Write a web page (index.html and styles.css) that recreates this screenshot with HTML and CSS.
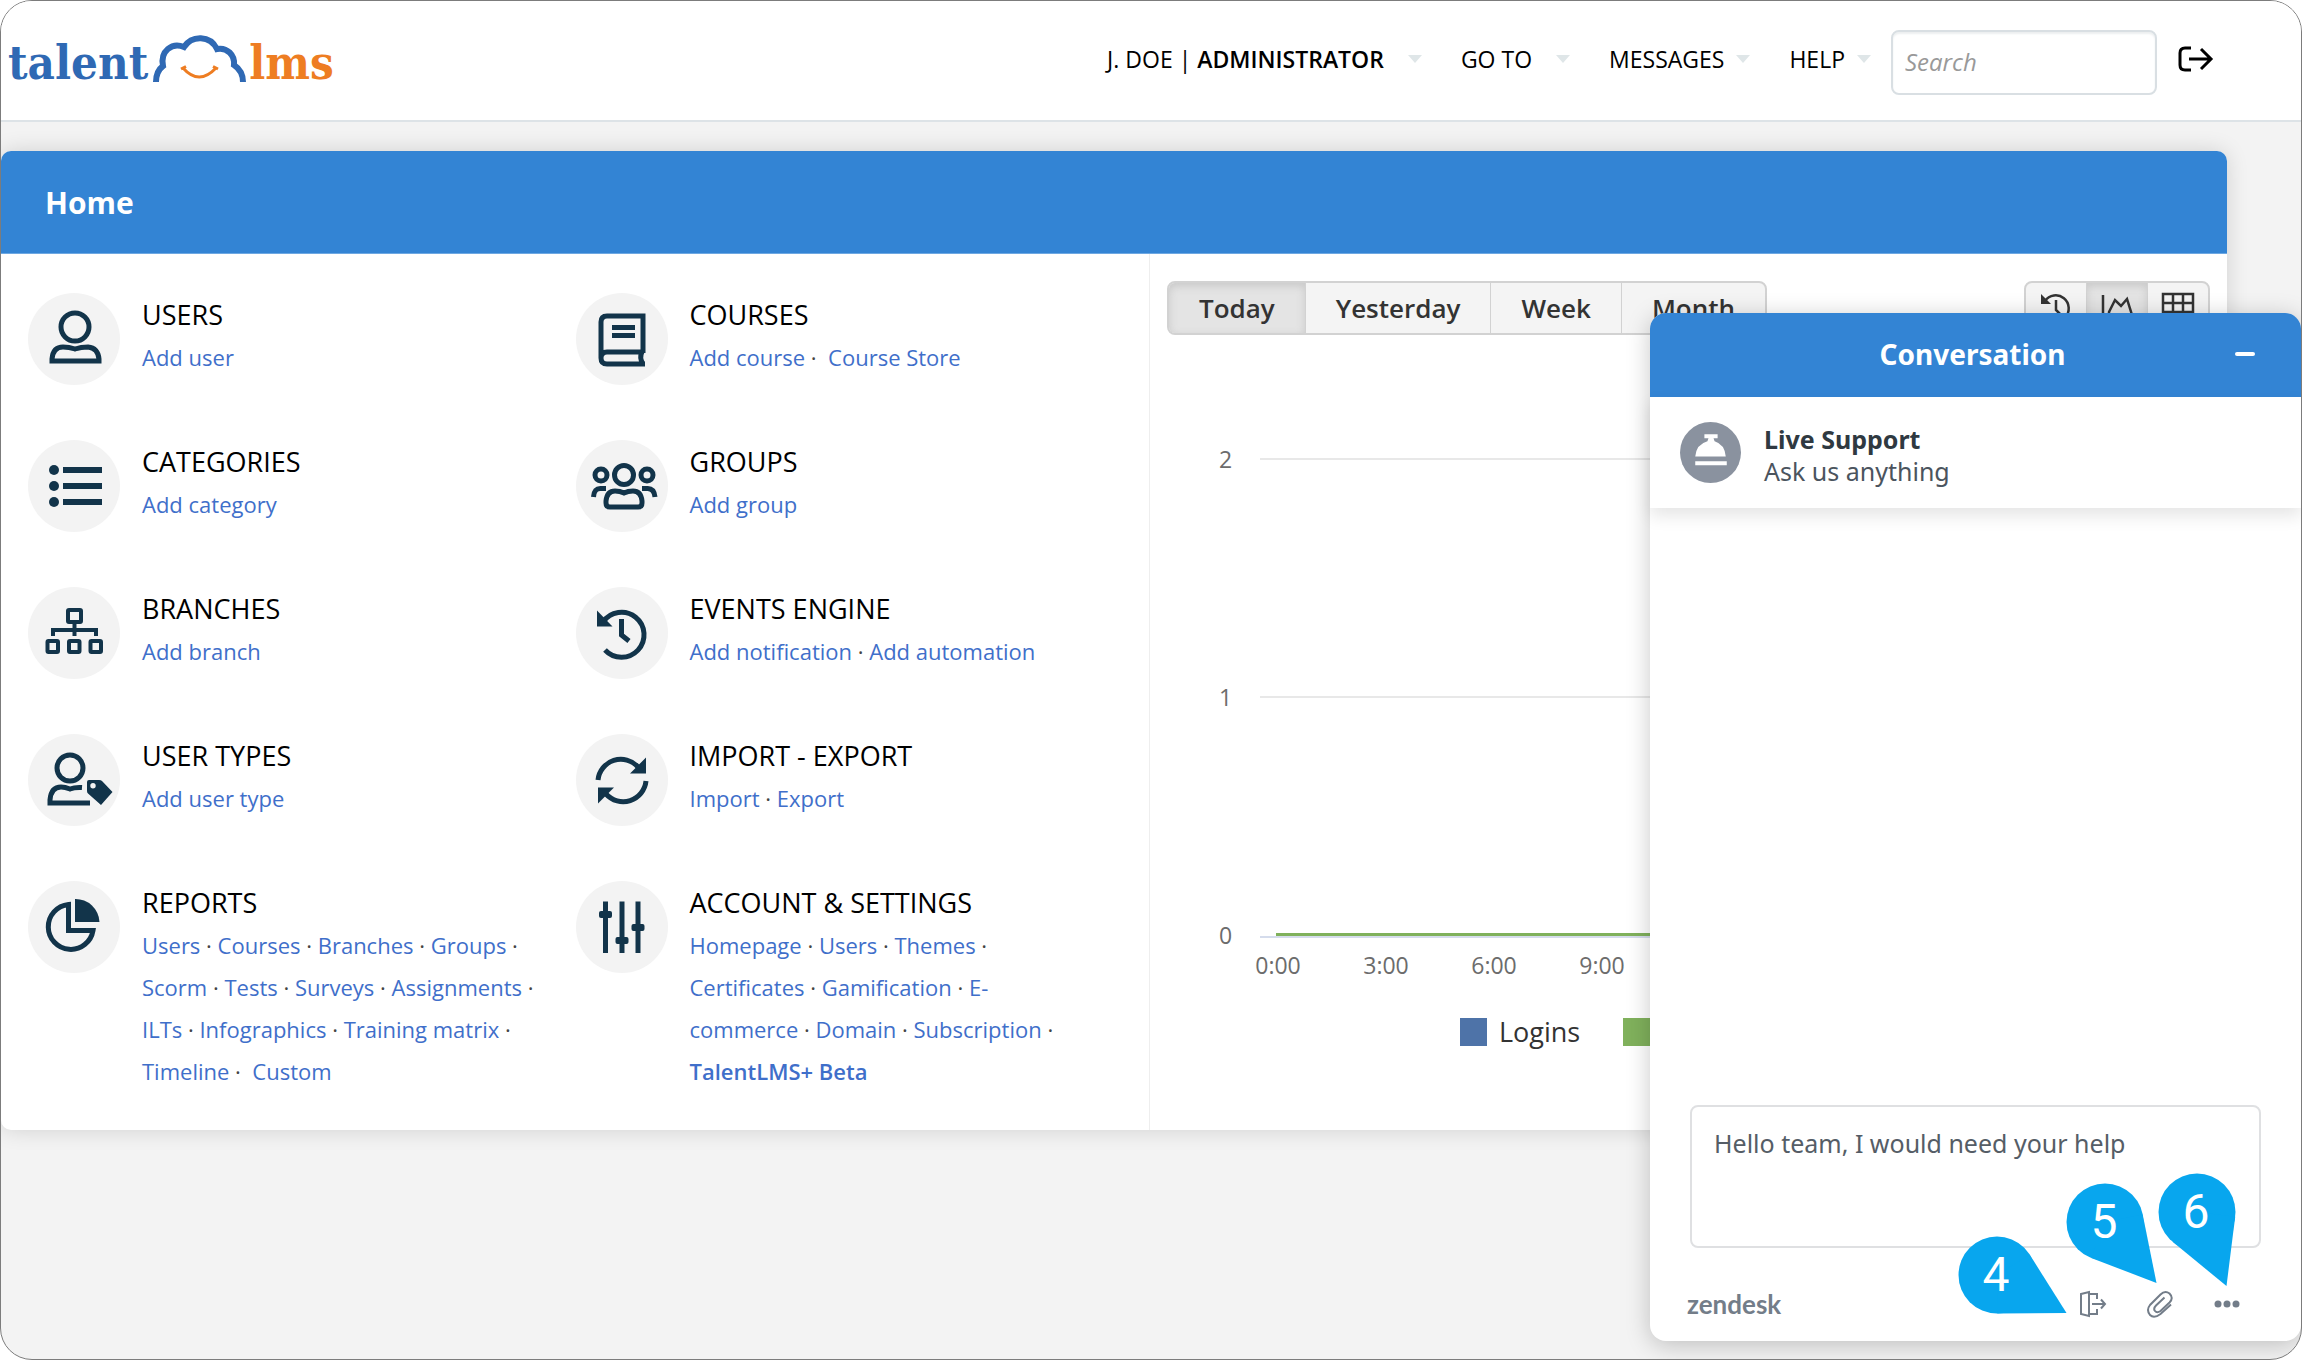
FILE: index.html
```html
<!DOCTYPE html>
<html lang="en">
<head>
<meta charset="utf-8">
<title>TalentLMS - Home</title>
<link rel="stylesheet" href="styles.css">
</head>
<body>
<div class="frame">
  <header class="topbar">
    <a class="logo" href="#" aria-label="TalentLMS">
      <span class="logo-talent">talent</span>
      <svg class="logo-cloud" viewBox="0 0 98 50" aria-hidden="true">
        <path d="M5 48C5 40 8 35 12 32C9 17 21 8 33 13C41 1 59 1 66 15C76 13 84 21 83 31C89 35 92 41 92 48" fill="none" stroke="#2f69b4" stroke-width="6"/>
        <path d="M32 34Q48 52 65 34M30 35L35 32.500M62 32.500L67 35" fill="none" stroke="#ee7d22" stroke-width="3"/>
      </svg>
      <span class="logo-lms">lms</span>
    </a>
    <nav class="menu">
      <a href="#" class="menu-item menu-user"><span>J. DOE | <b>ADMINISTRATOR</b></span><i class="caret"></i></a>
      <a href="#" class="menu-item menu-goto">GO TO<i class="caret"></i></a>
      <a href="#" class="menu-item menu-messages">MESSAGES<i class="caret"></i></a>
      <a href="#" class="menu-item menu-help">HELP<i class="caret"></i></a>
      <input class="search" type="search" placeholder="Search" aria-label="Search">
      <a href="#" class="logout" aria-label="Log out">
        <svg viewBox="0 0 36 26" aria-hidden="true"><path d="M13 2H7Q2 2 2 7V19Q2 24 7 24H13M11 13H33M23 3L33 13L23 23" fill="none" stroke="#000" stroke-width="3"/></svg>
      </a>
    </nav>
  </header>

  <main class="card">
    <h1 class="card-title">Home</h1>
    <div class="card-body">
      <div class="tiles">
        <section class="tile">
          <svg class="icon" viewBox="0 0 92 92" aria-hidden="true"><circle cx="47" cy="34" r="14"/><path d="M24 68V66Q25 54 35 54Q41 54 47 56Q53 54 60 54Q70 55 71 66V68Z"/></svg>
          <div class="tile-text"><h2>USERS</h2><p><a href="#">Add user</a></p></div>
        </section>
        <section class="tile">
          <svg class="icon" viewBox="0 0 92 92" aria-hidden="true"><path d="M67 60V23H31Q25 23 25 29V65Q25 71 31 71H69M25 65Q25 59 31 59H67M66 59Q63 65 67 71M36 34.500H59M36 42.500H59"/></svg>
          <div class="tile-text"><h2>COURSES</h2><p><a href="#">Add course</a> · &nbsp;<a href="#">Course Store</a></p></div>
        </section>
        <section class="tile">
          <svg class="icon" viewBox="0 0 92 92" aria-hidden="true"><path d="M35 30H74M35 46H74M35 62H74" stroke-width="6"/><g class="solid"><circle cx="26" cy="30" r="5"/><circle cx="26" cy="46" r="5"/><circle cx="26" cy="62" r="5"/></g></svg>
          <div class="tile-text"><h2>CATEGORIES</h2><p><a href="#">Add category</a></p></div>
        </section>
        <section class="tile">
          <svg class="icon" viewBox="0 0 92 92" aria-hidden="true"><circle cx="48" cy="35" r="9.500"/><circle cx="25" cy="35" r="6"/><circle cx="71" cy="35" r="6"/><path d="M34 67H62Q66 67 66 63V61Q65 51 57 51Q52 51 48 53Q44 51 39 51Q31 51 30 61V63Q30 67 34 67ZM17.500 57Q18 48 25 48.500H30M79 57Q78 48 71 48.500H66"/></svg>
          <div class="tile-text"><h2>GROUPS</h2><p><a href="#">Add group</a></p></div>
        </section>
        <section class="tile">
          <svg class="icon thin" viewBox="0 0 92 92" aria-hidden="true"><rect x="40" y="23" width="13" height="12" rx="1"/><rect x="19.500" y="54" width="10.500" height="11" rx="1"/><rect x="41" y="54" width="10.500" height="11" rx="1"/><rect x="62.500" y="54" width="10.500" height="11" rx="1"/><path d="M46.500 35V49M25 49V43H68V49"/></svg>
          <div class="tile-text"><h2>BRANCHES</h2><p><a href="#">Add branch</a></p></div>
        </section>
        <section class="tile">
          <svg class="icon" viewBox="0 0 92 92" aria-hidden="true"><path d="M27 35A22.500 22.500 0 1 1 29 63M45.500 32V48L53 54"/><path class="solid" d="M21 23.500V39.500H36.500Z"/></svg>
          <div class="tile-text"><h2>EVENTS ENGINE</h2><p><a href="#">Add notification</a> · <a href="#">Add automation</a></p></div>
        </section>
        <section class="tile">
          <svg class="icon" viewBox="0 0 92 92" aria-hidden="true"><circle cx="42" cy="34" r="13"/><path d="M62 69H22V66Q23 53 33 53Q37 53 42 55Q47 53 54 53.500"/><path class="solid" fill-rule="evenodd" d="M59 48Q59 46 61 46H71Q73 46 74 47L84.500 58L73 71L60 59.500Q59 58.500 59 57ZM65 49A2.700 2.700 0 1 0 65 54.400A2.700 2.700 0 1 0 65 49Z"/></svg>
          <div class="tile-text"><h2>USER TYPES</h2><p><a href="#">Add user type</a></p></div>
        </section>
        <section class="tile">
          <svg class="icon" viewBox="0 0 92 92" aria-hidden="true"><path d="M22 46A23 23 0 0 1 62 33M70 47A23 23 0 0 1 30 60"/><path class="solid" d="M70 23.500V39.500H54ZM22 69.500V53.500H38Z"/></svg>
          <div class="tile-text"><h2>IMPORT - EXPORT</h2><p><a href="#">Import</a> · <a href="#">Export</a></p></div>
        </section>
        <section class="tile">
          <svg class="icon" viewBox="0 0 92 92" aria-hidden="true"><path d="M40.500 23.500A22.500 22.500 0 1 0 65 49.500H40.500Z"/><path class="solid" d="M47 18A24 24 0 0 1 71.500 41H47Z"/></svg>
          <div class="tile-text"><h2>REPORTS</h2><p><a href="#">Users</a> · <a href="#">Courses</a> · <a href="#">Branches</a> · <a href="#">Groups</a> · <a href="#">Scorm</a> · <a href="#">Tests</a> · <a href="#">Surveys</a> · <a href="#">Assignments</a> · <a href="#">ILTs</a> · <a href="#">Infographics</a> · <a href="#">Training matrix</a> · <a href="#">Timeline</a> · &nbsp;<a href="#">Custom</a></p></div>
        </section>
        <section class="tile">
          <svg class="icon" viewBox="0 0 92 92" aria-hidden="true"><path d="M29.500 20.500V72M46 20.500V72M62 20.500V72"/><g class="solid"><rect x="23" y="30" width="13" height="7" rx="2"/><rect x="39.500" y="56" width="13" height="7" rx="2"/><rect x="55.500" y="43" width="13" height="7" rx="2"/></g></svg>
          <div class="tile-text"><h2>ACCOUNT &amp; SETTINGS</h2><p><a href="#">Homepage</a> · <a href="#">Users</a> · <a href="#">Themes</a> · <a href="#">Certificates</a> · <a href="#">Gamification</a> · <a href="#">E-commerce</a> · <a href="#">Domain</a> · <a href="#">Subscription</a> · <a href="#"><b>TalentLMS+ Beta</b></a></p></div>
        </section>
      </div>

      <section class="stats">
        <div class="toolbar">
          <div class="group">
            <button type="button" class="active">Today</button><button type="button">Yesterday</button><button type="button">Week</button><button type="button">Month</button>
          </div>
          <div class="group group-icons">
            <button type="button" aria-label="Timeline"><svg viewBox="0 0 36 36"><path d="M7 11A13 13 0 1 1 8 27M18 10V20L22 24" fill="none" stroke="#333" stroke-width="2.500"/><path d="M3 4V14H13Z" fill="#333"/></svg></button><button type="button" class="active" aria-label="Graph"><svg viewBox="0 0 36 36"><path d="M4 5V31H34M10 25V22L16 10L22 16L28 9L33 25Z" fill="none" stroke="#333" stroke-width="2.500"/></svg></button><button type="button" aria-label="Table"><svg viewBox="0 0 36 36"><path d="M3 4H33V32H3ZM3 13H33M3 22H33M13 4V32M23 4V32" fill="none" stroke="#333" stroke-width="2.500"/></svg></button>
          </div>
        </div>
        <div class="chart">
          <div class="level"><span>2</span><i></i></div>
          <div class="level"><span>1</span><i></i></div>
          <div class="level level-zero"><span>0</span><i><i class="series"></i></i></div>
          <div class="hours"><span>0:00</span><span>3:00</span><span>6:00</span><span>9:00</span></div>
          <div class="legend"><i class="swatch logins"></i><span>Logins</span><i class="swatch completions"></i></div>
        </div>
      </section>
    </div>
  </main>

  <aside class="chat">
    <header class="chat-head">
      <h2>Conversation</h2>
      <button type="button" class="minimize" aria-label="Minimize"></button>
    </header>
    <div class="agent">
      <svg class="avatar" viewBox="0 0 60 60" aria-hidden="true"><circle cx="30" cy="30" r="30" fill="#8a929f"/><path d="M15 34Q16 22 27 19L28 16H24V12H37V16H33L34 19Q44 22 45 34ZM15 38.500H46V42.500H15Z" fill="#fff"/></svg>
      <div class="agent-text"><strong>Live Support</strong><span>Ask us anything</span></div>
    </div>
    <div class="log"></div>
    <textarea class="message" aria-label="Message">Hello team, I would need your help</textarea>
    <footer class="chat-foot">
      <a href="#" class="brand">zendesk</a>
      <button type="button" aria-label="End chat"><svg viewBox="0 0 28 28"><path d="M2 4L10 2V26L2 24ZM10 4H18V9M10 24H18V19M13 14H26M22 9.500L26 14L22 18.500" fill="none" stroke="#737d89" stroke-width="2"/></svg></button>
      <button type="button" aria-label="Attach a file"><svg viewBox="0 0 28 28"><path d="M25 14.500L14.500 24Q8 29 4 25Q0 20 4 15L14.500 4.500Q19 0 23.500 3.500Q28 8 23.500 12.500L14.500 21Q11 23.500 9 21Q7 18.500 10 15.500L18.500 7.500" fill="none" stroke="#737d89" stroke-width="2"/></svg></button>
      <button type="button" aria-label="Options"><svg viewBox="0 0 28 28"><g fill="#737d89"><circle cx="5" cy="14" r="3.500"/><circle cx="14" cy="14" r="3.500"/><circle cx="23" cy="14" r="3.500"/></g></svg></button>
    </footer>
    <svg class="pin pin-4" viewBox="-40 -40 122 122"><circle r="38.500"/><path d="M32.600-20.500L69.500 38L0.300 38.500L0 0Z"/><text x="-1" y="16">4</text></svg>
    <svg class="pin pin-5" viewBox="-40 -40 122 122"><circle r="38.500"/><path d="M37.700-7.600L51.500 61L-13.800 35.900L0 0Z"/><text x="-1" y="16">5</text></svg>
    <svg class="pin pin-6" viewBox="-40 -40 122 122"><circle r="38.500"/><path d="M38.200 4.800L29.500 74L-24.400 29.800L0 0Z"/><text x="-1" y="16">6</text></svg>
  </aside>
</div>
</body>
</html>
```

FILE: styles.css
```css
* {
  box-sizing: border-box;
}

body {
  margin: 0;
  background: #fff;
  font-family: "Open Sans", "Noto Sans", sans-serif;
  color: #000;
}

a {
  color: inherit;
  text-decoration: none;
}

h1,
h2,
p {
  margin: 0;
}

button {
  margin: 0;
  padding: 0;
  border: 0;
  background: none;
  font: inherit;
  color: inherit;
}

.frame {
  position: relative;
  min-height: 100vh;
  overflow: hidden;
  border: 1px solid #7c7c7c;
  border-radius: 32px;
  background: #f3f3f3;
}

/* Top bar */

.topbar {
  display: flex;
  justify-content: space-between;
  height: 121px;
  padding: 0 87px 0 7px;
  border-bottom: 2px solid #dde3e7;
  background: #fff;
}

.logo {
  display: flex;
  align-items: flex-start;
  padding-top: 33px;
  font: bold 47px/58px "DejaVu Serif Condensed", "DejaVu Serif", serif;
}

.logo-talent {
  color: #2f69b4;
}

.logo-lms {
  color: #ee7d22;
}

.logo-cloud {
  width: 98px;
  height: 50px;
  margin: 0 0 0 3px;
}

.menu {
  display: flex;
  align-items: center;
  padding-bottom: 4px;
  font-size: 23px;
}

.menu-item {
  display: flex;
  align-items: center;
  line-height: 32px;
}

.menu b {
  font-weight: 600;
}

.caret {
  border: 7px solid transparent;
  border-top: 8px solid #dfe6e8;
  border-bottom: 0;
}

.menu-user,
.menu-goto {
  gap: 24px;
  margin-right: 39px;
}

.menu-messages,
.menu-help {
  gap: 12px;
  margin-right: 39px;
}

.menu-help {
  margin-right: 20px;
}

.search {
  width: 266px;
  height: 65px;
  margin-top: 8px;
  padding: 0 12px 2px;
  border: 2px solid #d9dfe3;
  border-radius: 8px;
  background: #fff;
  box-shadow: inset 0 2px 2px #eceff0;
  font: italic 24px "Open Sans", sans-serif;
}

.search::placeholder {
  color: #999;
}

.logout {
  display: flex;
  margin-left: 21px;
}

.logout svg {
  width: 36px;
  height: 26px;
}

/* Home card */

.card {
  margin: 29px 74px 0 0;
  border-radius: 10px;
  background: #fff;
  box-shadow: 0 0 22px rgba(0, 0, 0, 0.14);
}

.card-title {
  height: 103px;
  padding: 0 44px;
  border-bottom: 1px solid #6ea8e2;
  border-radius: 10px 10px 0 0;
  background: #3384d4;
  color: #fff;
  font-size: 30px;
  font-weight: 700;
  line-height: 104px;
}

.card-body {
  display: grid;
  grid-template-columns: 1149fr 1077fr;
}

.tiles {
  display: grid;
  grid-template-columns: 1fr 1fr;
  grid-auto-rows: minmax(147px, auto);
  padding: 39px 26px 38px 27px;
  border-right: 1px solid #eee;
}

.tile {
  display: flex;
  gap: 22px;
  padding-right: 33px;
}

.icon {
  flex: none;
  width: 92px;
  height: 92px;
  border-radius: 50%;
  background: #f3f3f3;
  fill: none;
  stroke: #12344a;
  stroke-width: 5px;
}

.icon.thin {
  stroke-width: 4px;
}

.icon .solid {
  fill: #12344a;
  stroke: none;
}

.tile-text {
  padding-top: 4px;
}

.tile h2 {
  margin-bottom: 3px;
  font-size: 27px;
  font-weight: 500;
  line-height: 36px;
}

.tile p {
  color: #444;
  font-size: 22px;
  line-height: 42px;
}

.tile a {
  color: #3f6fca;
}

.tile b {
  font-weight: 600;
}

/* Statistics */

.stats {
  padding: 27px 17px 0;
}

.toolbar {
  display: flex;
  justify-content: space-between;
}

.group {
  display: flex;
  height: 54px;
  border: 2px solid #d2d2d2;
  border-radius: 8px;
  background: #f4f4f4;
  color: #333;
  font-size: 26px;
  font-weight: 600;
}

.group button {
  padding: 0 30px;
}

.group button + button {
  border-left: 1px solid #d2d2d2;
}

.group .active {
  border-radius: 6px 0 0 6px;
  background: #e4e4e4;
  box-shadow: inset 0 3px 8px #c8c8c8;
}

.group-icons button {
  padding: 0 12px;
}

.group-icons .active {
  border-radius: 0;
}

.group-icons svg {
  display: block;
  width: 36px;
  height: 36px;
}

.chart {
  padding: 104px 0 0 52px;
  color: #6c6c6c;
  font-size: 23px;
}

.level {
  display: flex;
  align-items: center;
  gap: 28px;
  height: 40px;
  margin-bottom: 198px;
}

.level > i {
  flex: 1;
  height: 2px;
  background: #e8e8e8;
}

.level-zero {
  margin-bottom: 0;
}

.level-zero > i {
  height: 5px;
  padding-left: 16px;
  background: linear-gradient(#fff 3px, #d5dcec 3px);
}

.series {
  display: block;
  height: 3px;
  background: #80b15c;
}

.hours {
  display: grid;
  grid-template-columns: repeat(4, 108px);
  margin-top: -6px;
  padding-left: 5px;
  line-height: 32px;
  text-align: center;
}

.legend {
  display: flex;
  align-items: center;
  gap: 12px;
  margin-top: 33px;
  padding-left: 241px;
  color: #333;
  font-size: 27px;
  line-height: 36px;
}

.swatch {
  width: 27px;
  height: 28px;
}

.logins {
  background: #4e73a8;
}

.completions {
  margin-left: 31px;
  background: #80b15c;
}

/* Support chat */

.chat {
  position: absolute;
  right: 0;
  bottom: 18px;
  display: flex;
  flex-direction: column;
  width: 651px;
  border-radius: 16px;
  background: #fff;
  box-shadow: 0 4px 24px rgba(0, 0, 0, 0.22);
  font-family: "Noto Sans", "Open Sans", sans-serif;
}

.chat-head {
  display: grid;
  grid-template-columns: 1fr auto 1fr;
  align-items: center;
  height: 84px;
  padding: 0 46px 2px 40px;
  border-radius: 16px 16px 0 0;
  background: #3384d4;
  color: #fff;
}

.chat-head h2 {
  grid-column: 2;
  font-size: 28px;
  font-weight: 700;
}

.minimize {
  justify-self: end;
  width: 20px;
  height: 4px;
  border-radius: 2px;
  background: #fff;
}

.agent {
  display: flex;
  align-items: center;
  gap: 23px;
  height: 111px;
  padding: 0 30px;
  box-shadow: 0 8px 16px rgba(0, 0, 0, 0.1);
  color: #4b545e;
  font-size: 25px;
}

.avatar {
  width: 61px;
  height: 61px;
}

.agent-text {
  display: grid;
  padding-top: 4px;
  line-height: 32px;
}

.agent-text strong {
  color: #2f3941;
}

.log {
  height: 597px;
}

.message {
  height: 143px;
  margin: 0 40px;
  padding: 18px 22px;
  border: 2px solid #dfe0e2;
  border-radius: 8px;
  background: #fff;
  color: #555d66;
  font: 25px/36px "Noto Sans", sans-serif;
  resize: none;
}

.chat-foot {
  display: flex;
  align-items: center;
  gap: 39px;
  height: 93px;
  padding: 18px 60px 0 37px;
}

.chat-foot svg {
  display: block;
  width: 28px;
  height: 28px;
}

.brand {
  margin-right: auto;
  color: #737d89;
  font: bold 26px Lato, sans-serif;
}

/* Numbered pins over the chat */

.pin {
  position: absolute;
  width: 122px;
  height: 122px;
  fill: #08a6ee;
  pointer-events: none;
}

.pin text {
  fill: #fff;
  font: 48px Roboto, sans-serif;
  text-anchor: middle;
}

.pin-4 {
  left: 307px;
  top: 922px;
}

.pin-5 {
  left: 415px;
  top: 869px;
}

.pin-6 {
  left: 507px;
  top: 859px;
}
```
